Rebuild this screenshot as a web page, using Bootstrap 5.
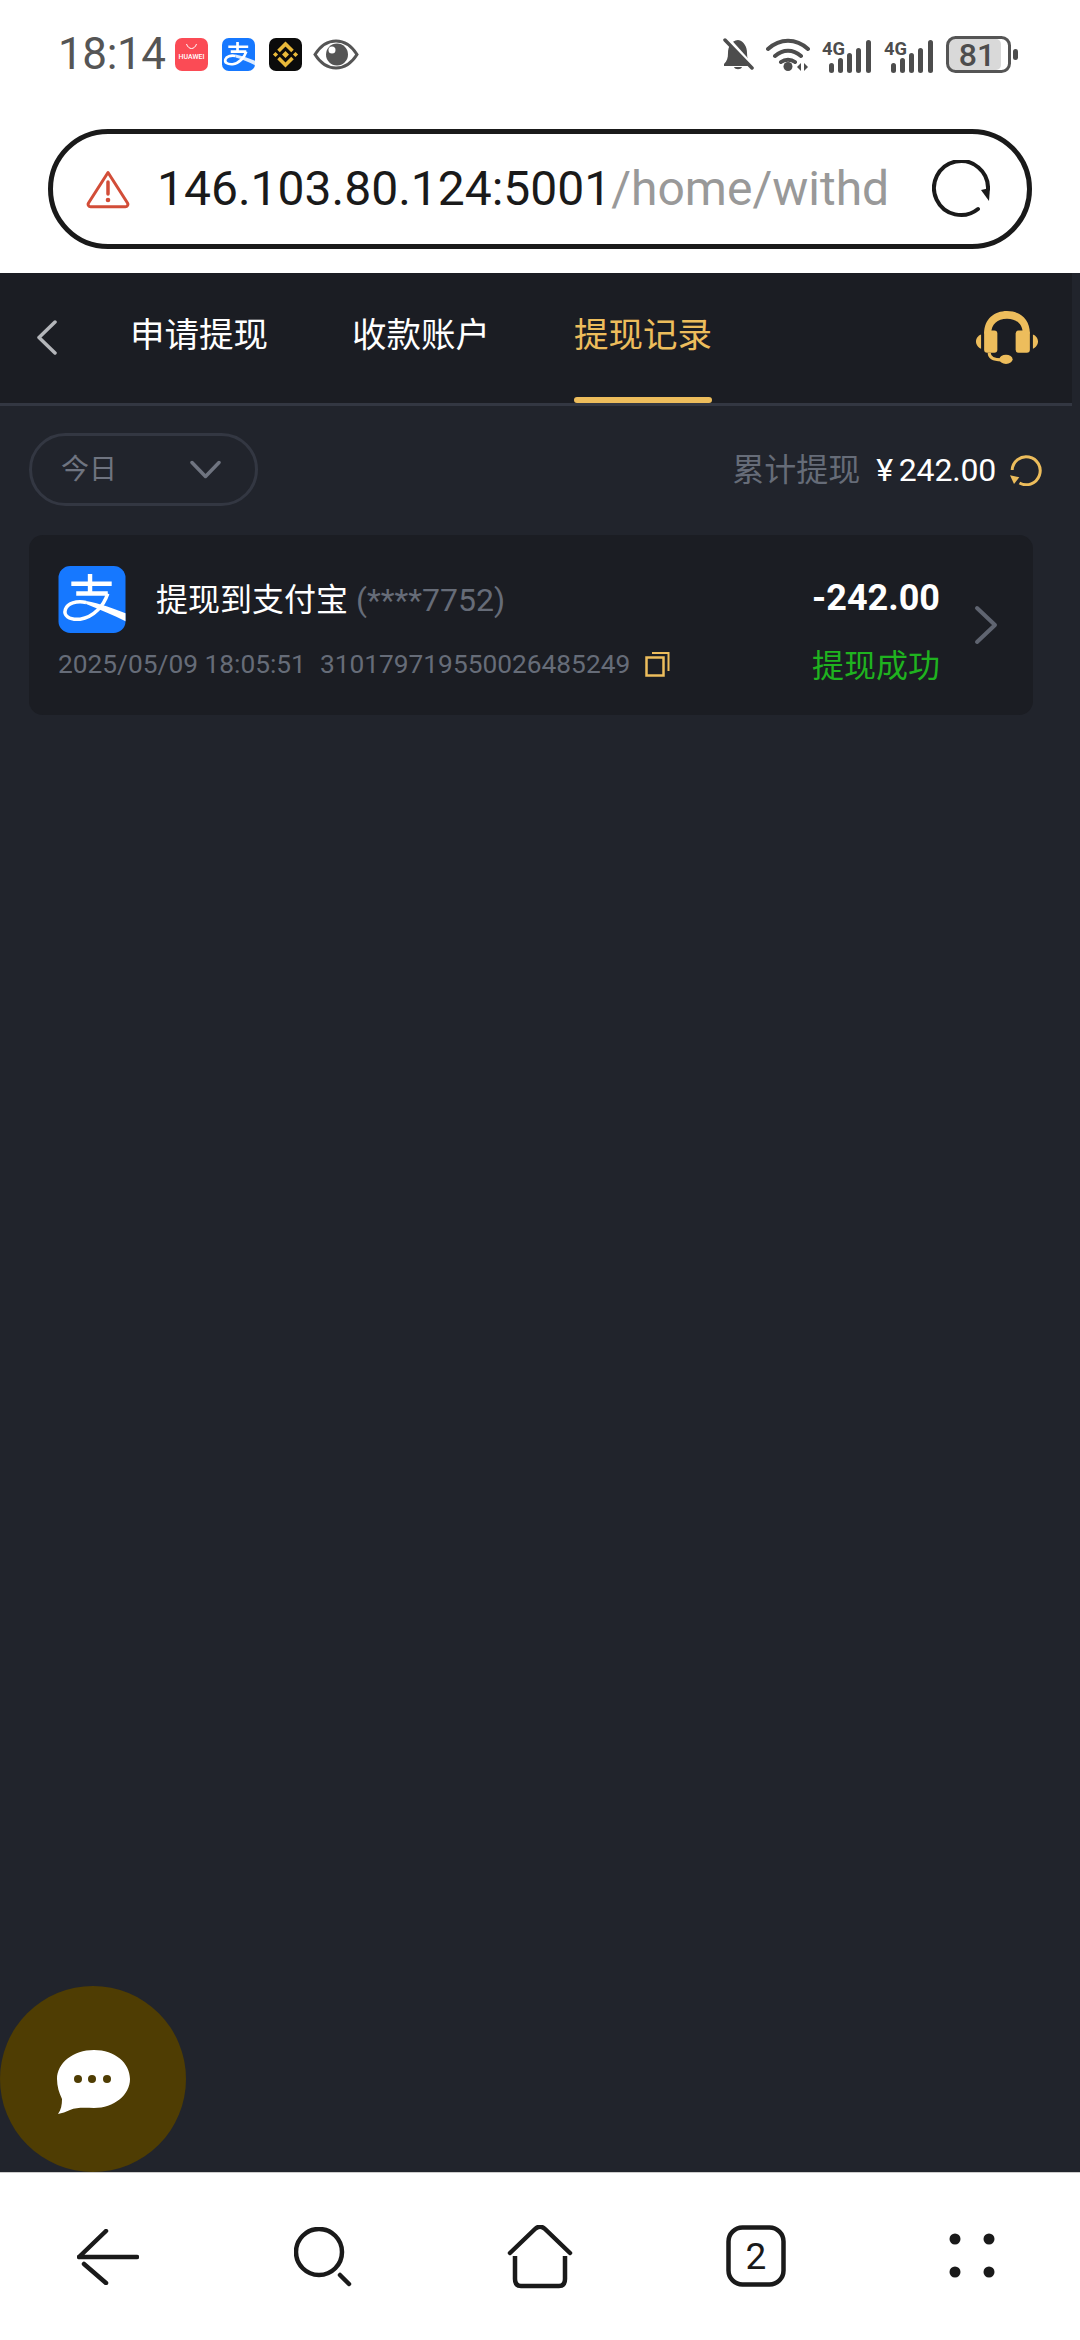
<!DOCTYPE html>
<html lang="zh-Hans">
<head>
  <meta charset="UTF-8" />
  <meta name="viewport" content="width=device-width, initial-scale=1" />
  <title>提现记录</title>
  <link href="https://cdn.jsdelivr.net/npm/bootstrap@5.3.3/dist/css/bootstrap.min.css" rel="stylesheet" />
  <style>
    body {
      width: 1080px;
      height: 2340px;
      overflow: hidden;
      background: #fff;
      font-family: Roboto, "Noto Sans CJK SC", sans-serif;
    }
    .status-row { height: 106px; padding: 2px 62px 0 58px; color: #555; }
    .clock { font-size: 44px; line-height: 1; letter-spacing: -.4px; margin-right: 9px; }
    .tray-left { gap: 14px; }
    .tray-eye { margin-left: -3px; }
    .tray-right { gap: 12px; }
    .addr-wrap { padding: 23px 48px 24px; }
    .addr-pill {
      height: 120px;
      border: 5px solid #1a1a1a;
      padding: 0 37px 0 33px;
      font-size: 48px;
      color: #1a1a1a;
    }
    .addr-path { color: #999; }
    .addr-text { margin-left: 27px; white-space: nowrap; }
    .page-main { background: #21242c; position: relative; overflow: hidden; }
    .top-tabs {
      width: 1072px;
      height: 133px;
      background: #1b1d23;
      border-bottom: 3px solid #333742;
      padding-left: 36px;
    }
    .back-icon { margin: 0 73px 2px 0; }
    .tab-item {
      position: relative;
      height: 100%;
      padding-bottom: 4px;
      font-size: 34.5px;
      color: #fff;
      white-space: nowrap;
    }
    .tab-gap { margin-right: 84px; }
    .tab-on { color: #edbd5c; }
    .tab-on::after {
      content: "";
      position: absolute;
      left: 0;
      right: 0;
      bottom: 0;
      height: 6px;
      border-radius: 3px;
      background: #edbd5c;
    }
    .headset-icon { margin-right: 34px; }
    .filter-row { padding: 27px 38px 0 29px; }
    .filter-pill {
      width: 229px;
      height: 73px;
      border: 3px solid #333742;
      padding: 0 34px 0 29px;
      font-size: 28px;
      color: #6f7480;
    }
    .sum-label { font-size: 32px; color: #666c78; }
    .sum-value { font-size: 32px; color: #fff; margin: 0 14px 0 16px; letter-spacing: -.2px; }
    .sum-yen { margin-right: 6px; }
    .record-card {
      width: 1004px;
      height: 180px;
      margin: 29px 0 0 29px;
      padding: 31px 35px 0 29px;
      background: #1b1d23;
      border: 0;
      border-radius: 14px;
    }
    .record-title { font-size: 32px; color: #fff; margin-left: 30px; white-space: nowrap; }
    .record-acct { color: #666c78; }
    .record-meta { font-size: 26.3px; color: #666c78; margin-top: 15px; white-space: nowrap; line-height: 32px; }
    .record-meta span + span { margin-left: 14px; }
    .copy-icon { margin-left: 15px; }
    .record-right { margin: -2px 34px 0 auto; text-align: right; }
    .record-amount { font-size: 36px; font-weight: 700; color: #fff; line-height: 68px; }
    .record-state { font-size: 32px; color: #1fb31f; line-height: 34px; margin-top: 17px; }
    .record-chevron { margin-top: 39px; }
    .chat-fab {
      position: absolute;
      left: 0;
      bottom: 0;
      width: 186px;
      height: 186px;
      background: #4f3d03;
    }
    .chat-bubble { margin-top: 6px; }
    .bottom-nav { height: 168px; background: #fff; border-top: 1px solid #ccc; }
    .nav-back { padding-top: 56px; }
    .nav-search { padding-top: 54px; }
    .nav-home, .nav-tabs-count { padding-top: 52px; }
    .nav-more { padding-top: 60px; }
  </style>
</head>
<body class="d-flex flex-column">

  <div class="status-row d-flex align-items-center flex-shrink-0">
    <span class="clock">18:14</span>
    <div class="tray-left d-flex align-items-center me-auto">
      <svg width="33" height="33" viewBox="0 0 33 33">
        <rect width="33" height="33" rx="7" fill="#fb4b55"/>
        <path d="M11.500 6c1 3 3 4.500 5 4.500s4-1.500 5-4.500" fill="none" stroke="#fff" stroke-width="1"/>
        <text x="16.500" y="21" text-anchor="middle" font-size="7" font-family="Roboto" font-weight="500" textLength="26" lengthAdjust="spacingAndGlyphs" fill="#fff">HUAWEI</text>
      </svg>
      <svg width="33" height="33" viewBox="0 0 68 68">
        <rect width="68" height="68" rx="14" fill="#1678ff"/>
        <path d="M13 18H54M32 8V28M18 28H50" stroke="#fff" stroke-width="5.500" fill="none"/>
        <path d="M50 28C46 40 36 52 22 54C10 55 5 50 7 44C9 38 18 35 28 37" stroke="#fff" stroke-width="5.500" fill="none"/>
        <path d="M28 34C42 37 56 42 68 47V56C56 50 42 44 28 40Z" fill="#fff" opacity=".85"/>
      </svg>
      <svg width="33" height="33" viewBox="0 0 33 33">
        <rect width="33" height="33" rx="7" fill="#0b0b0b"/>
        <path d="M9.500 13 16.500 6l7 7M9.500 20l7 7 7-7" fill="none" stroke="#e9b93a" stroke-width="3.600"/>
        <path d="M16.500 13l3.500 3.500-3.500 3.500-3.500-3.500zM6.500 14l2.600 2.500-2.600 2.500-2.600-2.500zM26.500 14l2.600 2.500-2.600 2.500-2.600-2.500z" fill="#e9b93a"/>
      </svg>
      <svg width="46" height="31" viewBox="0 0 46 31" class="tray-eye">
        <path d="M2 15.500C8 6 15 2 23 2s15 4 21 13.500C38 25 31 29 23 29S8 25 2 15.500z" fill="none" stroke="#555" stroke-width="3"/>
        <circle cx="24" cy="15.500" r="11" fill="#555"/>
        <circle cx="19" cy="11" r="3.500" fill="#fff"/>
      </svg>
    </div>
    <div class="tray-right d-flex align-items-center">
      <svg width="31" height="33" viewBox="0 0 31 33" class="flex-shrink-0">
        <path d="M15 2c-7 1-10 7-10 13 0 5-1 8-4 11v2h27v-2c-3-3-4-6-4-11 0-6-3-12-9-13z" fill="#4d4d4d"/>
        <path d="M11 29c1 3 7 3 8 0z" fill="#4d4d4d"/>
        <path d="M4 0l27 30" stroke="#fff" stroke-width="4"/>
        <path d="M2 2l27 28" stroke="#4d4d4d" stroke-width="3.500" stroke-linecap="round"/>
      </svg>
      <svg width="44" height="33" viewBox="0 0 44 33" class="flex-shrink-0">
        <path d="M2 11C14 0 30 0 42 11M9 18c8-7 18-7 26 0M15 24c4-3 10-3 14 0" fill="none" stroke="#4d4d4d" stroke-width="4" stroke-linecap="round"/>
        <circle cx="22" cy="28.500" r="4.500" fill="#4d4d4d"/>
        <path d="M35 25v8l-4-4zM38 25v8l4-4z" fill="#4d4d4d"/>
      </svg>
      <svg width="50" height="37" viewBox="0 -4 50 37" class="flex-shrink-0">
        <text x="0" y="15" font-size="18" font-weight="700" font-family="Roboto" textLength="23" lengthAdjust="spacingAndGlyphs" fill="#4d4d4d">4G</text>
        <rect x="7" y="23" width="5" height="10" rx="2.500" fill="#4d4d4d"/>
        <rect x="16" y="18" width="5" height="15" rx="2.500" fill="#4d4d4d"/>
        <rect x="25" y="13" width="5" height="20" rx="2.500" fill="#4d4d4d"/>
        <rect x="34" y="8" width="5" height="25" rx="2.500" fill="#4d4d4d"/>
        <rect x="44" y="0" width="5" height="33" rx="2.500" fill="#4d4d4d"/>
      </svg>
      <svg width="50" height="37" viewBox="0 -4 50 37" class="flex-shrink-0">
        <text x="0" y="15" font-size="18" font-weight="700" font-family="Roboto" textLength="23" lengthAdjust="spacingAndGlyphs" fill="#4d4d4d">4G</text>
        <rect x="7" y="23" width="5" height="10" rx="2.500" fill="#4d4d4d"/>
        <rect x="16" y="18" width="5" height="15" rx="2.500" fill="#4d4d4d"/>
        <rect x="25" y="13" width="5" height="20" rx="2.500" fill="#4d4d4d"/>
        <rect x="34" y="8" width="5" height="25" rx="2.500" fill="#4d4d4d"/>
        <rect x="44" y="0" width="5" height="33" rx="2.500" fill="#4d4d4d"/>
      </svg>
      <svg width="72" height="37" viewBox="0 0 72 37" class="flex-shrink-0">
        <rect x="3" y="3" width="52" height="31" rx="5" fill="#d9d9d9"/>
        <rect x="1.500" y="1.500" width="62" height="34" rx="8" fill="none" stroke="#555" stroke-width="3"/>
        <text x="31" y="30" text-anchor="middle" font-size="32" font-weight="500" font-family="Roboto" fill="#4d4d4d">81</text>
        <rect x="67" y="13" width="5" height="11" rx="2.500" fill="#4d4d4d"/>
      </svg>
    </div>
  </div>

  <div class="addr-wrap flex-shrink-0">
    <div class="addr-pill rounded-pill d-flex align-items-center">
      <svg width="44" height="39" viewBox="0 0 44 39" class="flex-shrink-0">
        <path d="M22 2.500 41.500 33a2.500 2.500 0 0 1-2.200 3.800H4.700A2.500 2.500 0 0 1 2.500 33z" fill="none" stroke="#d24d38" stroke-width="3" stroke-linejoin="round"/>
        <path d="M22 12v12" stroke="#d24d38" stroke-width="3.500" stroke-linecap="round"/>
        <circle cx="22" cy="30" r="2.300" fill="#d24d38"/>
      </svg>
      <span class="addr-text">146.103.80.124:5001<span class="addr-path">/home/withd</span></span>
      <svg width="58" height="58" viewBox="0 0 58 58" class="ms-auto flex-shrink-0">
        <path d="M46 49A27 27 0 1 1 56 29" fill="none" stroke="#1a1a1a" stroke-width="4" stroke-linecap="round"/>
        <path d="M49 30 58 28 57 41z" fill="#1a1a1a"/>
      </svg>
    </div>
  </div>

  <main class="page-main flex-grow-1 d-flex flex-column">
    <nav class="top-tabs d-flex align-items-center flex-shrink-0">
      <svg width="21" height="35" viewBox="0 0 21 35" class="back-icon flex-shrink-0">
        <path d="M19 2 3 17.500 19 33" fill="none" stroke="#b4b6ba" stroke-width="3.500" stroke-linecap="round" stroke-linejoin="round"/>
      </svg>
      <div class="tab-item tab-gap d-flex align-items-center">申请提现</div>
      <div class="tab-item tab-gap d-flex align-items-center">收款账户</div>
      <div class="tab-item tab-on d-flex align-items-center">提现记录</div>
      <svg width="62" height="54" viewBox="0 0 61 53" class="headset-icon ms-auto flex-shrink-0">
        <path d="M8 22C8 8 18 0 30.500 0S53 8 53 22H46C46 13 40 7.500 30.500 7.500S15 13 15 22Z" fill="#edbd5c"/>
        <rect x="8" y="19" width="13" height="22" rx="3" fill="#edbd5c"/>
        <rect x="39" y="19" width="14" height="22" rx="3" fill="#edbd5c"/>
        <path d="M5 23V37C2 36 0 33 0 30S2 24 5 23ZM56 23V37C59 36 61 33 61 30S59 24 56 23Z" fill="#edbd5c"/>
        <path d="M13 41C13 46 17 48 25 48" fill="none" stroke="#edbd5c" stroke-width="3"/>
        <ellipse cx="29.500" cy="47.500" rx="6.500" ry="4.500" fill="#edbd5c"/>
      </svg>
    </nav>

    <div class="filter-row d-flex align-items-center justify-content-between">
      <div class="filter-pill rounded-pill d-flex align-items-center justify-content-between">
        <span>今日</span>
        <svg width="31" height="19" viewBox="0 0 31 19">
          <path d="M2 2.500 15.500 16.500 29 2.500" fill="none" stroke="#6f7480" stroke-width="3.500" stroke-linecap="round" stroke-linejoin="round"/>
        </svg>
      </div>
      <div class="d-flex align-items-center">
        <span class="sum-label">累计提现</span>
        <span class="sum-value"><span class="sum-yen">¥</span>242.00</span>
        <svg width="32" height="33" viewBox="0 0 32 33">
          <path d="M2.200 17A14 14 0 1 1 9.500 30" fill="none" stroke="#edbd5c" stroke-width="3"/>
          <path d="M0 22.300 9.300 24.300 4 31Z" fill="#edbd5c"/>
        </svg>
      </div>
    </div>

    <div class="record-card card flex-row">
      <div>
        <div class="d-flex align-items-center">
          <svg width="68" height="67" viewBox="0 0 68 68" class="flex-shrink-0">
            <rect width="68" height="68" rx="12" fill="#1678ff"/>
            <path d="M13 18H54M32 8V28M18 28H50" stroke="#fff" stroke-width="4.500" fill="none"/>
            <path d="M50 28C46 40 36 52 22 54C10 55 5 50 7 44C9 38 18 35 28 37" stroke="#fff" stroke-width="3.500" fill="none"/>
            <path d="M28 35.500C42 38 56 43 68 48V56C56 50 42 44 28 38.500Z" fill="#fff"/>
          </svg>
          <span class="record-title">提现到支付宝 <span class="record-acct">(****7752)</span></span>
        </div>
        <div class="record-meta d-flex align-items-center">
          <span>2025/05/09 18:05:51</span>
          <span>310179719550026485249</span>
          <svg width="25" height="26" viewBox="0 0 25 26" class="copy-icon flex-shrink-0">
            <rect x="1.500" y="6.500" width="17" height="18" fill="none" stroke="#edbd5c" stroke-width="2.500"/>
            <path d="M7 2h16.500v18" fill="none" stroke="#edbd5c" stroke-width="2"/>
          </svg>
        </div>
      </div>
      <div class="record-right">
        <div class="record-amount">-242.00</div>
        <div class="record-state">提现成功</div>
      </div>
      <svg width="24" height="40" viewBox="0 0 24 40" class="record-chevron flex-shrink-0">
        <path d="M3 3 21 20 3 37" fill="none" stroke="#5f6470" stroke-width="4" stroke-linecap="round" stroke-linejoin="round"/>
      </svg>
    </div>

    <div class="chat-fab rounded-circle d-flex align-items-center justify-content-center">
      <svg width="73" height="64" viewBox="0 0 73 64" class="chat-bubble">
        <path d="M37 0C58 0 73 13 73 29S57 58 37 58C29 58 20 57 13 60C9 62 5 63 1 64C4 60 5 55 5 49C2 43 0 36 0 29C0 13 16 0 37 0Z" fill="#fff"/>
        <circle cx="21" cy="29" r="4" fill="#4f3d03"/>
        <circle cx="35" cy="29" r="4" fill="#4f3d03"/>
        <circle cx="50" cy="29" r="4" fill="#4f3d03"/>
      </svg>
    </div>
  </main>

  <footer class="bottom-nav row g-0 flex-shrink-0 align-items-start">
    <div class="nav-back col d-flex justify-content-center">
      <svg width="62" height="56" viewBox="0 0 62 56">
        <path d="M2 28H60M2 28 29 2M7 35 29 54" fill="none" stroke="#1a1a1a" stroke-width="4.500" stroke-linecap="round"/>
      </svg>
    </div>
    <div class="nav-search col d-flex justify-content-center">
      <svg width="60" height="60" viewBox="0 0 60 60">
        <circle cx="25" cy="25" r="23" fill="none" stroke="#1a1a1a" stroke-width="4.500"/>
        <path d="M46 48 55 57" stroke="#1a1a1a" stroke-width="4.500" stroke-linecap="round"/>
      </svg>
    </div>
    <div class="nav-home col d-flex justify-content-center">
      <svg width="66" height="64" viewBox="0 0 66 64">
        <path d="M3 28 28 4C31 1 35 1 38 4L63 28" fill="none" stroke="#1a1a1a" stroke-width="4.500" stroke-linecap="round"/>
        <path d="M8 31V54C8 59 10 61 14 61H52C56 61 58 59 58 54V31" fill="none" stroke="#1a1a1a" stroke-width="4.500"/>
      </svg>
    </div>
    <div class="nav-tabs-count col d-flex justify-content-center">
      <svg width="60" height="62" viewBox="0 0 60 62">
        <rect x="2.500" y="2.500" width="55" height="57" rx="14" fill="none" stroke="#1a1a1a" stroke-width="4.500"/>
        <text x="30" y="43.500" text-anchor="middle" font-size="37" font-family="Roboto" fill="#1a1a1a">2</text>
      </svg>
    </div>
    <div class="nav-more col d-flex justify-content-center">
      <svg width="46" height="46" viewBox="0 0 46 46">
        <circle cx="6" cy="6" r="5.500" fill="#1a1a1a"/>
        <circle cx="40" cy="6" r="5.500" fill="#1a1a1a"/>
        <circle cx="6" cy="39" r="5.500" fill="#1a1a1a"/>
        <circle cx="40" cy="39" r="5.500" fill="#1a1a1a"/>
      </svg>
    </div>
  </footer>

  <script src="https://cdn.jsdelivr.net/npm/bootstrap@5.3.3/dist/js/bootstrap.bundle.min.js"></script>
</body>
</html>
